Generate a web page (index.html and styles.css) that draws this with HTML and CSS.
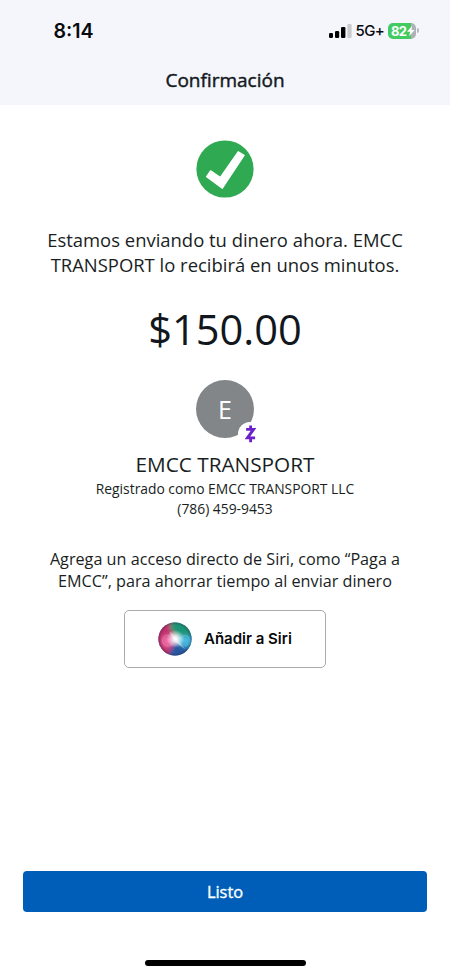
FILE: index.html
```html
<!DOCTYPE html>
<html lang="es">
<head>
<meta charset="utf-8">
<meta name="viewport" content="width=device-width, initial-scale=1">
<title>Confirmación</title>
<link rel="stylesheet" href="styles.css">
</head>
<body>
<div class="screen">
  <header class="header">
    <div class="status">
      <span class="time">8:14</span>
      <div class="indicators">
        <svg class="signal" width="23" height="16" viewBox="0 0 23 16">
          <rect x="0" y="10" width="4" height="5" rx="1.2"/>
          <rect x="6" y="8" width="4.2" height="7" rx="1.2"/>
          <rect x="12" y="4" width="4.4" height="11" rx="1.2"/>
          <rect x="18.4" y="1" width="4.2" height="14" rx="1.2" fill="#c9cacd"/>
        </svg>
        <span class="network">5G+</span>
        <div class="battery">
          <span class="level">82</span>
          <svg class="bolt" width="8" height="12" viewBox="0 0 9 12"><path d="M5.8 0 0 6.8h3.6L2.4 12 8.6 4.9H5z" fill="#fff"/></svg>
        </div>
        <span class="battery-tip"></span>
      </div>
    </div>
    <h1 class="title">Confirmación</h1>
  </header>
  <main class="content">
    <svg class="check" width="58" height="58" viewBox="0 0 58 58">
      <circle cx="29" cy="29" r="28.6" fill="#2fa952"/>
      <path d="M14.6 30.9 24.4 37.5 42.2 11.8 48 15.4 26.3 48.2 10.7 36.6z" fill="#fff" stroke="#fff" stroke-width="1.4" stroke-linejoin="round"/>
    </svg>
    <p class="message">Estamos enviando tu dinero ahora. EMCC<br>TRANSPORT lo recibirá en unos minutos.</p>
    <p class="amount">$150.00</p>
    <div class="avatar">
      <span class="initial">E</span>
      <span class="badge">
        <svg width="11" height="18" viewBox="0 0 10 18" fill="none" stroke="#6b20c9"><path d="M0.6 4.4H8L1.9 12.9H9.6" stroke-width="2.9"/><path d="M5.1 0.4V4M5.1 13V17.2" stroke-width="2.8"/></svg>
      </span>
    </div>
    <h2 class="name">EMCC TRANSPORT</h2>
    <p class="detail">Registrado como EMCC TRANSPORT LLC</p>
    <p class="detail">(786) 459-9453</p>
    <p class="hint">Agrega un acceso directo de Siri, como “Paga a<br>EMCC”, para ahorrar tiempo al enviar dinero</p>
    <button class="siri">
      <svg width="34" height="34" viewBox="0 0 34 34">
        <defs>
          <clipPath id="orb"><circle cx="17" cy="17" r="16.6"/></clipPath>
          <radialGradient id="glow"><stop offset="0" stop-color="#fff"/><stop offset=".3" stop-color="#fff" stop-opacity=".8"/><stop offset="1" stop-color="#fff" stop-opacity="0"/></radialGradient>
          <radialGradient id="rim"><stop offset=".82" stop-color="#29233f" stop-opacity="0"/><stop offset="1" stop-color="#29233f" stop-opacity=".35"/></radialGradient>
          <filter id="soft" x="-50%" y="-50%" width="200%" height="200%"><feGaussianBlur stdDeviation="2.2"/></filter>
        </defs>
        <g clip-path="url(#orb)">
          <rect width="34" height="34" fill="#49598f"/>
          <g filter="url(#soft)">
            <path d="M-4-4H14L17 16 9 38H-4z" fill="#c32d6c"/>
            <path d="M15-4H38V15L18 17 11 4z" fill="#1d9475"/>
            <path d="M18 17 38 12V27L26 30z" fill="#259bc4"/>
            <path d="M17 20 30 27 25 38H8z" fill="#2658a2"/>
            <ellipse cx="10" cy="19" rx="6" ry="6" fill="#ef6da8"/>
            <ellipse cx="26" cy="18.5" rx="6" ry="5" fill="#4cbde3"/>
          </g>
          <circle cx="17" cy="17" r="16.6" fill="url(#rim)"/>
          <circle cx="10" cy="18.5" r="5.5" fill="none" stroke="#fff" stroke-opacity=".25" stroke-width=".7"/>
          <circle cx="27" cy="18.5" r="5" fill="none" stroke="#fff" stroke-opacity=".25" stroke-width=".7"/>
          <ellipse cx="17.5" cy="16.8" rx="9" ry="9" fill="url(#glow)"/>
          <path d="M11 9 18 15 27 27 17 20z" fill="#fff" fill-opacity=".4"/>
        </g>
      </svg>
      <span class="siri-label">Añadir a Siri</span>
    </button>
  </main>
  <footer class="footer">
    <button class="done">Listo</button>
    <div class="home-indicator"></div>
  </footer>
</div>
</body>
</html>
```
FILE: styles.css
```css
* { box-sizing: border-box; }
body { margin: 0; background: #fff; color: #191e23; font-family: "Open Sans", sans-serif; }
h1, h2, p { margin: 0; font-weight: 400; }
button { font-family: inherit; padding: 0; }
svg { display: block; flex: none; }

.screen { width: 450px; height: 975px; display: flex; flex-direction: column; overflow: hidden; }
.header { height: 105px; flex: none; background: #f4f6fb; }
.status { height: 61px; padding: 0 31px 0 53.5px; display: flex; align-items: center; justify-content: space-between; }
.time { font: 600 19.6px/24px Inter, sans-serif; color: #090a0d; }
.indicators { display: flex; align-items: center; }
.network { margin-left: 3.5px; width: 27.5px; font: 500 15px/20px Inter, sans-serif; letter-spacing: -0.6px; white-space: nowrap; color: #090a0d; }
.battery { margin-left: 5px; width: 28px; height: 16px; border-radius: 5px; background: linear-gradient(90deg, #43cb61 82%, #aeb2b5 82%); display: flex; align-items: center; padding-left: 3px; }
.level { width: 16px; font: 700 13px/16px Inter, sans-serif; letter-spacing: -0.6px; color: #fff; }
.battery-tip { margin-left: 1px; width: 2px; height: 5px; border-radius: 0 2px 2px 0; background: #b6b8bb; }
.title { text-align: center; font-size: 19px; line-height: 24px; font-weight: 400; -webkit-text-stroke: 0.45px currentColor; margin-top: 7px; color: #15191e; }

.content { flex: 1; display: flex; flex-direction: column; align-items: center; text-align: center; padding-top: 35px; }
.message { margin-top: 29px; font-size: 18.45px; line-height: 25px; white-space: nowrap; }
.amount { margin-top: 23px; font-size: 41.6px; line-height: 58px; color: #11171c; }
.avatar { position: relative; margin-top: 22px; width: 58px; height: 58px; border-radius: 50%; background: #828689; display: flex; align-items: center; justify-content: center; }
.initial { font-size: 25px; line-height: 34px; color: #fff; }
.badge { position: absolute; left: 42px; top: 42px; width: 24px; height: 24px; border-radius: 50%; background: #fff; display: flex; align-items: center; justify-content: center; }
.name { margin-top: 11px; font-size: 20.75px; line-height: 30px; white-space: nowrap; }
.detail { font-size: 13.85px; line-height: 20px; white-space: nowrap; }
.hint { margin-top: 29px; font-size: 16.2px; line-height: 22px; white-space: nowrap; }
.siri { margin-top: 18px; width: 202px; height: 58px; border: 1px solid #a9abad; border-radius: 5px; background: #fff; display: flex; align-items: center; padding-left: 33px; gap: 12px; }
.siri-label { font: 600 15px/20px Inter, sans-serif; color: #08090a; white-space: nowrap; }

.footer { flex: none; height: 104px; padding: 0 23px; display: flex; flex-direction: column; align-items: center; }
.done { width: 100%; height: 41px; border: 0; border-radius: 4px; background: #005eb8; color: #fff; font-size: 16.4px; -webkit-text-stroke: 0.35px currentColor; line-height: 24px; }
.home-indicator { margin-top: 48px; width: 161px; height: 6px; border-radius: 3px; background: #000; }
```
